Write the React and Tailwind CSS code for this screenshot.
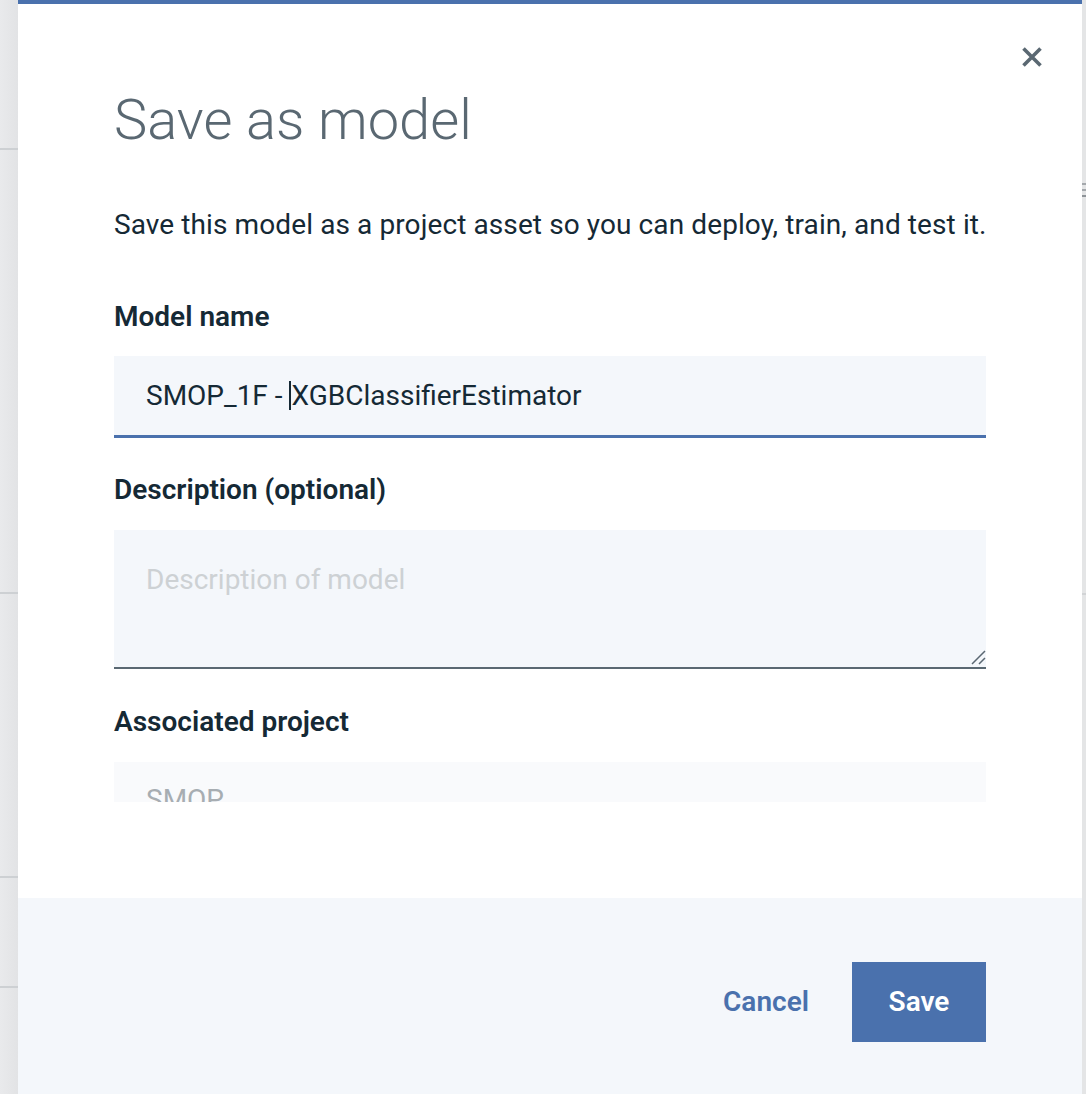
import React from "react";

const font = { fontFamily: "Roboto, 'Liberation Sans', sans-serif" };

const CloseIcon = () => (
  <svg width="20" height="20" viewBox="0 0 20 20" fill="none">
    <path d="M1.5 1.5 L18.5 18.5 M18.5 1.5 L1.5 18.5" stroke="#5a6872" strokeWidth="3.6" />
  </svg>
);

const ResizeGrip = () => (
  <svg width="16" height="16" viewBox="0 0 16 16" fill="none">
    <path d="M2 15 L15 2 M9 15 L15 9" stroke="#5a6872" strokeWidth="1.5" />
  </svg>
);

const LeftStrip = () => (
  <div className="w-[18px] shrink-0 bg-gradient-to-r from-[#e9eaec] to-[#e2e3e5] flex flex-col">
    <div className="h-[150px] shrink-0 border-b-2 border-[#cdd0d3]" />
    <div className="h-[444px] shrink-0 border-b-2 border-[#cdd0d3]" />
    <div className="h-[284px] shrink-0 border-b-2 border-[#cdd0d3]" />
    <div className="h-[110px] shrink-0 border-b-2 border-[#cdd0d3]" />
  </div>
);

const RightStrip = () => (
  <div className="w-[4px] shrink-0 bg-[#e4e5e6] flex flex-col">
    <div className="h-[183px] shrink-0" />
    <div className="h-[2px] bg-[#a4a8ac]" />
    <div className="h-[4px]" />
    <div className="h-[2px] bg-[#a4a8ac]" />
    <div className="h-[4px]" />
    <div className="h-[2px] bg-[#8e9398]" />
    <div className="h-[396px] shrink-0" />
    <div className="h-[2px] bg-[#d2d4d6]" />
  </div>
);

export default function App() {
  return (
    <div className="h-[1094px] w-full flex overflow-hidden bg-white" style={font}>
      <LeftStrip />
      <div className="flex-1 min-w-0 flex flex-col border-t-4 border-[#4a71ad] bg-white">
        <div className="flex justify-end pt-[43px] pr-[40px]">
          <button className="w-[20px] h-[20px]">
            <CloseIcon />
          </button>
        </div>

        <div className="h-[735px] overflow-hidden px-[96px]">
          <h1 className="mt-[25px] text-[56px] leading-[56px] font-light text-[#5a6872]">
            Save as model
          </h1>
          <p className="mt-[61px] whitespace-nowrap text-[28px] leading-[32px] tracking-[0.1px] text-[#152935]">
            Save this model as a project asset so you can deploy, train, and test it.
          </p>

          <label className="block mt-[60px] text-[28px] leading-[32px] font-semibold text-[#152935]">
            Model name
          </label>
          <div className="mt-[23px] h-[82px] bg-[#f4f7fb] border-b-[3px] border-[#4a71ad] flex items-center px-[32px] text-[28px] text-[#152935]">
            <span>SMOP_1F -&nbsp;</span>
            <span className="inline-block w-[2px] h-[29px] bg-[#152935]" />
            <span>XGBClassifierEstimator</span>
          </div>

          <label className="block mt-[36px] text-[28px] leading-[32px] font-semibold text-[#152935]">
            Description (optional)
          </label>
          <div className="relative mt-[24px] h-[139px] bg-[#f4f7fb] border-b-[2px] border-[#5a6872] px-[32px] pt-[34px] text-[28px] leading-[32px] text-[#cdd1d4]">
            Description of model
            <span className="absolute right-0 bottom-[2px]">
              <ResizeGrip />
            </span>
          </div>

          <label className="block mt-[37px] text-[28px] leading-[32px] font-semibold text-[#152935]">
            Associated project
          </label>
          <div className="mt-[24px] h-[80px] bg-[#f9fafc] px-[32px] pt-[22px] text-[28px] leading-[32px] text-[#a7adb2]">
            SMOP
          </div>
        </div>

        <div className="h-[96px] shrink-0" />

        <div className="flex-1 bg-[#f4f7fb] flex justify-end items-start gap-[43px] pt-[64px] pr-[96px]">
          <button className="h-[80px] text-[28px] font-semibold text-[#4a71ad]">Cancel</button>
          <button className="h-[80px] w-[134px] bg-[#4a71ad] text-[28px] font-semibold text-white">
            Save
          </button>
        </div>
      </div>
      <RightStrip />
    </div>
  );
}
